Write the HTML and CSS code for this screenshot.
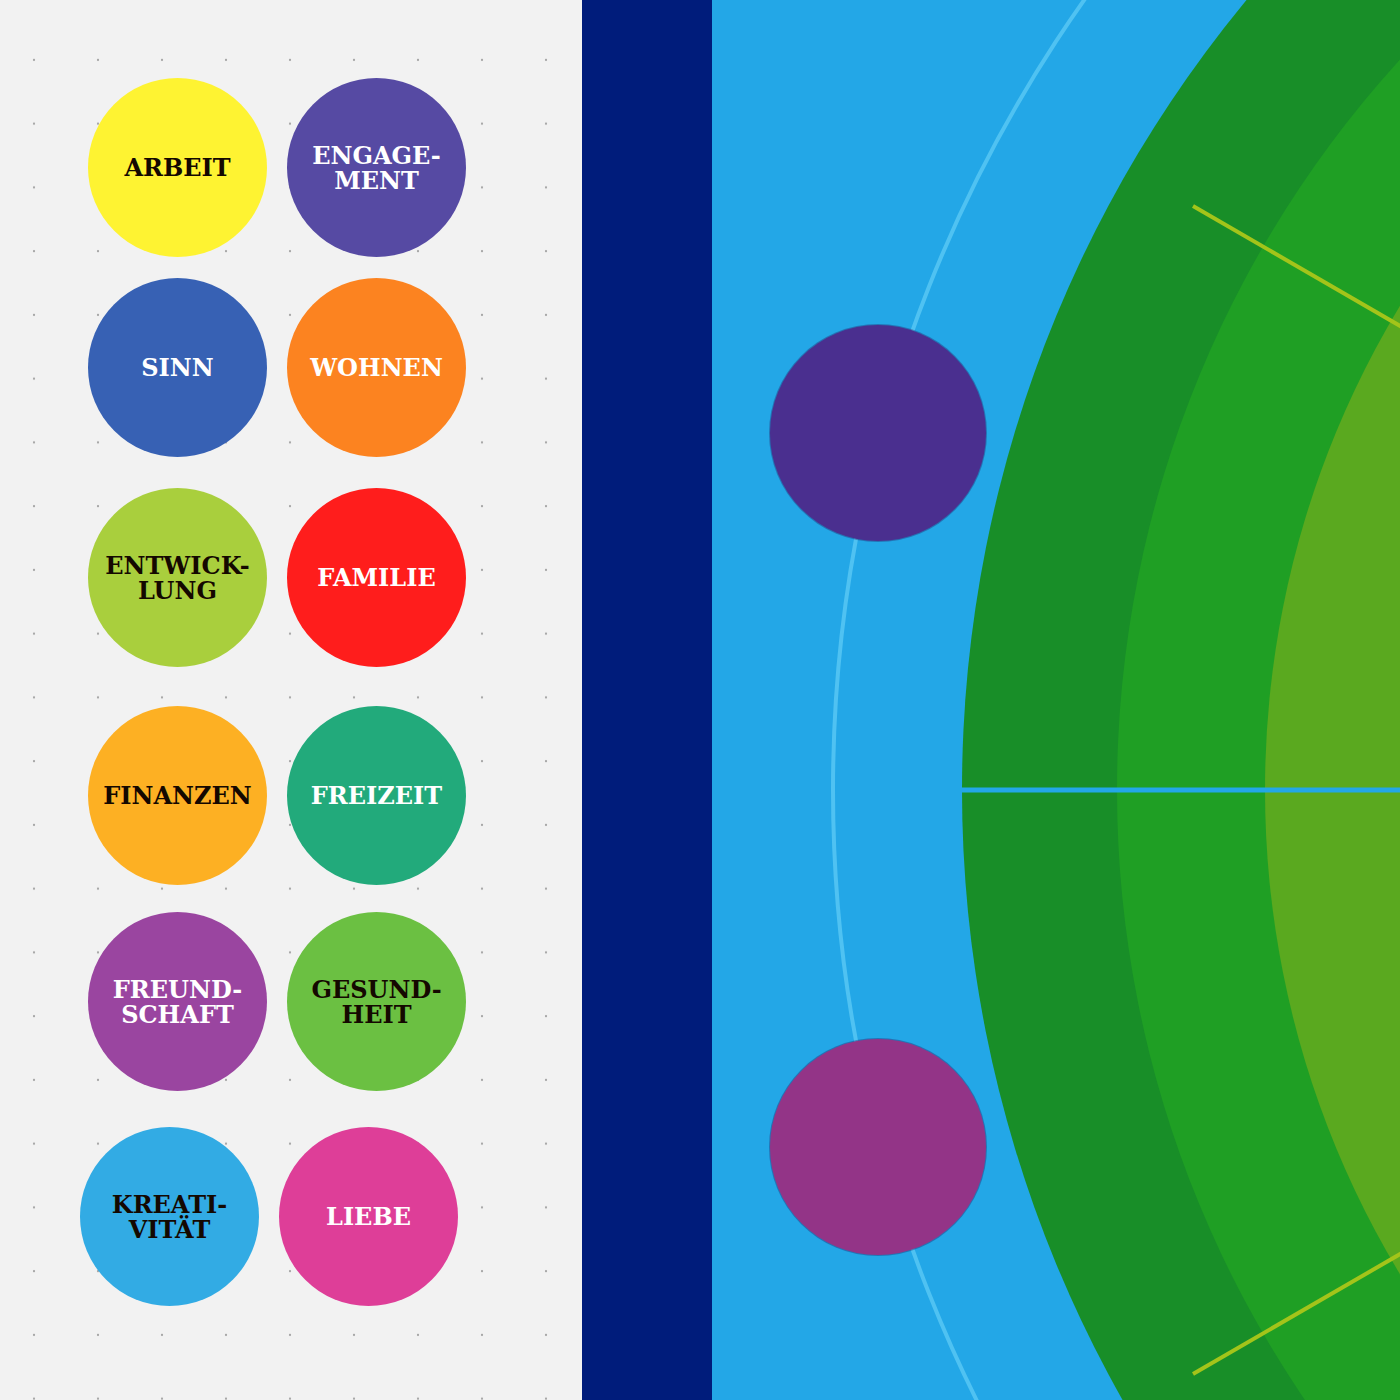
FILE: index.html
```html
<!DOCTYPE html>
<html lang="de">
<head>
    <meta charset="UTF-8">
    <meta name="viewport" content="width=device-width, initial-scale=1.0">
    <title>Lebensbereiche</title>
    <link rel="stylesheet" href="styles.css">
</head>
<body>
    <!-- Sticker board with the life areas -->
    <aside class="board">
        <div class="row">
            <div class="sticker yellow dark">ARBEIT</div>
            <div class="sticker violet">ENGAGE-<br>MENT</div>
        </div>
        <div class="row">
            <div class="sticker blue">SINN</div>
            <div class="sticker orange">WOHNEN</div>
        </div>
        <div class="row">
            <div class="sticker lime dark">ENTWICK-<br>LUNG</div>
            <div class="sticker red">FAMILIE</div>
        </div>
        <div class="row">
            <div class="sticker amber dark">FINANZEN</div>
            <div class="sticker teal">FREIZEIT</div>
        </div>
        <div class="row">
            <div class="sticker purple">FREUND-<br>SCHAFT</div>
            <div class="sticker green dark">GESUND-<br>HEIT</div>
        </div>
        <div class="row">
            <div class="sticker sky dark">KREATI-<br>VITÄT</div>
            <div class="sticker pink">LIEBE</div>
        </div>
    </aside>

    <div class="divider"></div>

    <!-- Target rings -->
    <main class="canvas">
        <svg class="rings" viewBox="0 0 688 1400" width="688" height="1400">
            <circle cx="1489" cy="790" r="1368" fill="none" stroke="#4fc2f2" stroke-width="4"/>
            <circle cx="1489" cy="790" r="1239" fill="#188e28"/>
            <circle cx="1489" cy="790" r="1084" fill="#1f9f24"/>
            <circle cx="1489" cy="790" r="936" fill="#5aa91f"/>
            <line x1="250" y1="790" x2="688" y2="790" stroke="#23a7e7" stroke-width="5"/>
            <line x1="481" y1="206" x2="740" y2="356" stroke="#a3c41a" stroke-width="4"/>
            <line x1="481" y1="1374" x2="740" y2="1224" stroke="#a3c41a" stroke-width="4"/>
        </svg>
        <div class="token token-violet" style="left: 58px; top: 325px;"></div>
        <div class="token token-purple" style="left: 58px; top: 1039px;"></div>
    </main>
</body>
</html>
```

FILE: styles.css
```css
body {
    margin: 0;
    padding: 0;
    display: flex;
    width: 1400px;
    height: 1400px;
    overflow: hidden;
    font-family: "DejaVu Serif", "Liberation Serif", serif;
}

/* Left sticker board with dotted grid */
.board {
    width: 582px;
    flex-shrink: 0;
    box-sizing: border-box;
    padding: 78px 0 0 88px;
    background-color: #f2f2f2;
    background-image: radial-gradient(circle, #a9a9a9 1px, transparent 1.6px);
    background-size: 64px 63.75px;
    background-position: 2px 28px;
}
.row {
    display: flex;
    gap: 20px;
}
.row:nth-child(2) { margin-top: 21px; }
.row:nth-child(3) { margin-top: 31px; }
.row:nth-child(4) { margin-top: 39px; }
.row:nth-child(5) { margin-top: 27px; }
.row:nth-child(6) { margin-top: 36px; margin-left: -8px; }

.sticker {
    width: 179px;
    height: 179px;
    border-radius: 50%;
    display: flex;
    align-items: center;
    justify-content: center;
    text-align: center;
    font-size: 24px;
    font-weight: 700;
    line-height: 25px;
    color: #fff;
}
.sticker.dark { color: #140800; }

.yellow { background: #fef332; }
.violet { background: #564aa3; }
.blue { background: #3761b4; }
.orange { background: #fc8320; }
.lime { background: #a9cf3d; }
.red { background: #ff1d1c; }
.amber { background: #fdb023; }
.teal { background: #22aa7b; }
.purple { background: #9a45a0; }
.green { background: #6bc042; }
.sky { background: #32abe4; }
.pink { background: #de3e98; }

/* Navy strip between board and canvas */
.divider {
    width: 130px;
    flex-shrink: 0;
    background: #001c7b;
}

/* Canvas with rings */
.canvas {
    position: relative;
    flex: 1;
    background: #23a7e7;
    overflow: hidden;
}
.rings {
    display: block;
}
.token {
    position: absolute;
    width: 216px;
    height: 216px;
    border-radius: 50%;
    box-shadow: 0 0 0 1px rgba(40, 20, 90, 0.35);
}
.token-violet { background: #4a2f8f; }
.token-purple { background: #933487; }
```
